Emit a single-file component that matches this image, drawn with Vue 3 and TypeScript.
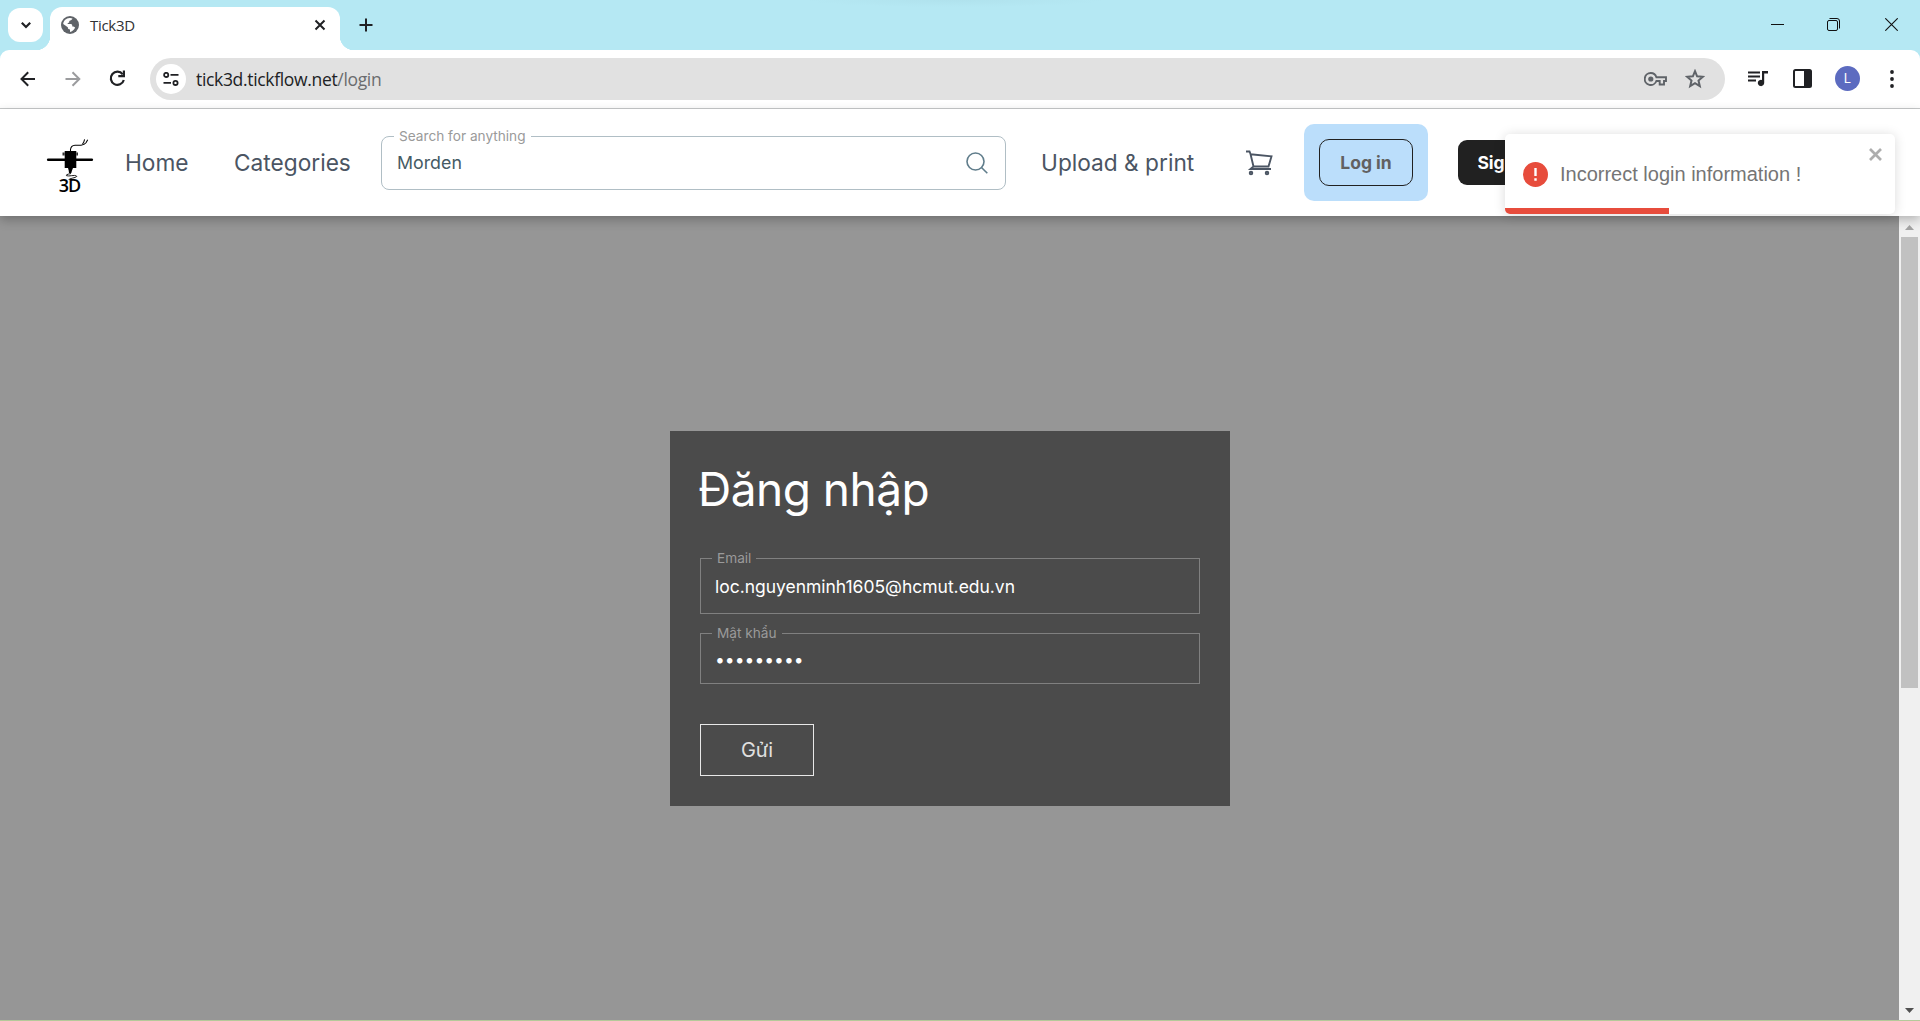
<script setup lang="ts">
import { ref } from 'vue'

const search = ref('Morden')
const email = ref('loc.nguyenminh1605@hcmut.edu.vn')
const mask = '•'.repeat(9)
const progress = ref(42)
</script>

<template>
  <div class="window">
    <div class="tabstrip">
      <button class="tab-search">
        <svg width="12" height="12" viewBox="0 0 12 12"><path d="M1.800 3.800 6 8l4.200-4.200" fill="none" stroke="#202124" stroke-width="2.200" /></svg>
      </button>
      <div class="tab">
        <svg class="globe" width="18" height="18" viewBox="0 0 18 18">
          <circle cx="9" cy="9" r="9" fill="#5f6368" />
          <path d="M8.600 2.100C9.700 2 10.600 2.200 11.500 2.600 11 3.500 10.300 4.400 9.200 4.600 8.200 4.800 8.100 5.600 8.200 6.600 7.300 6.700 6.600 7.100 6.600 8.100H9.800c1.300 0 1.500 1.200 1.500 2.300 1.300.1 2.300.4 2.900 1.200-1.200 2.700-3.200 4.200-5.200 4.300v-2.400c-1.400 0-2.200-.8-2.200-2.200L2.200 8C2.500 4.700 5 2.400 8.600 2.100Z" fill="#fff" />
        </svg>
        <span class="tab-title">Tick3D</span>
        <svg class="tab-close" width="12" height="12" viewBox="0 0 12 12"><path d="m1.500 1.500 9 9m0-9-9 9" stroke="#202124" stroke-width="2" /></svg>
      </div>
      <svg class="new-tab" width="14" height="14" viewBox="0 0 14 14"><path d="M7 .5v13M.5 7h13" stroke="#202124" stroke-width="2" /></svg>
      <div class="caption">
        <svg width="13" height="13" viewBox="0 0 13 13"><path d="M0 6.500h13" stroke="#111" /></svg>
        <svg class="restore" width="13" height="13" viewBox="0 0 13 13" fill="none" stroke="#111"><rect x=".5" y="2.500" width="10" height="10" rx="1.500" /><path d="M2.500.500h7.500a2.500 2.500 0 0 1 2.500 2.500v7.500" /></svg>
        <svg width="13" height="13" viewBox="0 0 13 13"><path d="m.3.3 12.400 12.400m0-12.400L.3 12.700" stroke="#111" stroke-width="1.100" /></svg>
      </div>
    </div>

    <div class="toolbar">
      <svg class="back" width="16" height="16" viewBox="0 0 16 16" fill="none" stroke="#202124" stroke-width="2"><path d="M15 8H2M8.200 1.200 1.500 8l6.700 6.800" /></svg>
      <svg class="forward" width="16" height="16" viewBox="0 0 16 16" fill="none" stroke="#9b9c9e" stroke-width="2"><path d="M.5 8H14M7.500 1.200 14.300 8l-6.800 6.800" /></svg>
      <svg class="reload" width="17" height="17" viewBox="0 0 17 17"><path d="M13.700 4.300A6.600 6.600 0 1 0 14.800 10" fill="none" stroke="#202124" stroke-width="2.200" /><path d="M16 .5v6.700H9.300V5h4.500V.5Z" fill="#202124" /></svg>
      <div class="omnibox">
        <span class="site-info">
          <svg width="16" height="14" viewBox="0 0 16 14" fill="none" stroke="#202124" stroke-width="1.800"><circle cx="3.200" cy="2.900" r="2.100" /><path d="M7.500 2.900H15.500M.5 10.900H8" /><circle cx="12.500" cy="10.900" r="2.100" /></svg>
        </span>
        <span class="url">tick3d.tickflow.net<span class="path">/login</span></span>
        <svg class="key" width="23" height="14" viewBox="0 0 23 14"><path d="M6.800 1a6 6 0 1 0 5.600 8h3.300v3.500h4.300V9H22V5.200h-9.600A6 6 0 0 0 6.800 1Z" fill="none" stroke="#5f6368" stroke-width="1.900" /><circle cx="6.800" cy="7" r="2.600" fill="#5f6368" /></svg>
        <svg class="star" width="20" height="20" viewBox="0 0 20 20"><path d="m10 2.200 2.100 5.100 5.700.5-4.300 3.800 1.300 5.600-4.800-3-4.800 3 1.300-5.600-4.300-3.800 5.700-.5Z" fill="none" stroke="#5f6368" stroke-width="2" /></svg>
      </div>
      <svg class="media" width="20" height="16" viewBox="0 0 20 16"><path d="M0 1.500h12M0 5.500h12M0 9.500h8" stroke="#202124" stroke-width="2" /><path d="M14 0h6v2.500h-3.800V12a3.200 3.200 0 1 1-2.200-3.100Z" fill="#202124" /></svg>
      <svg class="panel" width="19" height="19" viewBox="0 0 19 19"><rect x="1" y="1" width="17" height="17" rx="1.500" fill="#fff" stroke="#202124" stroke-width="2" /><path d="M11 1h7v17h-7Z" fill="#202124" /></svg>
      <span class="avatar">L</span>
      <svg class="menu" width="4" height="18" viewBox="0 0 4 18" fill="#202124"><circle cx="2" cy="2" r="1.900" /><circle cx="2" cy="9" r="1.900" /><circle cx="2" cy="16" r="1.900" /></svg>
    </div>

    <header class="site-header">
      <svg class="logo" width="48" height="79" viewBox="0 -8 48 79">
        <path d="M2.200 28.700h43.600" stroke="#000" stroke-width="2.600" stroke-linecap="round" />
        <path d="M18.700 20h11.600v17H18.700Z" fill="#000" />
        <path d="M16.500 21.500h2.200v3h-2.200ZM30.300 21.500h1.700v3h-1.700Z" fill="#333" />
        <path d="M22 37h5l-1 2.500-.7 2.500h-2.300l-.3-2.500Z" fill="#000" />
        <path d="M24.500 20v-1.500q.5-4 4.500-4.300h6q3.500-.2 5-2.400l1.700-3M36.500 13l1.200-1.700.9-3" fill="none" stroke="#000" stroke-width="1.050" />
        <path d="M25 42.500q-6 1.200-4.500 2.200c2 1 8.500-1.200 10 .3 1.500 1.700-7 2-8 4" fill="none" stroke="#000" stroke-width=".9" />
        <text x="12.800" y="61.300" font-size="18" font-weight="600" letter-spacing="-1.200">3D</text>
      </svg>
      <a class="nav home">Home</a>
      <a class="nav categories">Categories</a>
      <fieldset class="search">
        <legend>Search for anything</legend>
        <span class="value">{{ search }}</span>
        <svg width="22" height="22" viewBox="0 0 22 22" fill="none" stroke="#607d8b" stroke-width="1.600"><circle cx="9.500" cy="9.500" r="8.500" /><path d="m15.500 15.500 5.800 5.800" /></svg>
      </fieldset>
      <a class="nav upload">Upload &amp; print</a>
      <svg class="cart" width="27" height="26" viewBox="0 0 27 26" fill="none" stroke="#4b5563" stroke-width="1.900"><path d="M0 1.500h3.500l1 2.500 3 12.500M4.500 4.300l21 2-3 10.200h-15l-3 2.500h20.500" /><circle cx="5" cy="23" r="1.300" /><circle cx="21" cy="23" r="1.300" /></svg>
      <span class="login-wrap"><button class="login">Log in</button></span>
      <button class="signup">Sign up</button>
    </header>

    <div class="viewport">
      <main class="page">
        <form class="card">
          <h1>Đăng nhập</h1>
          <fieldset class="field email">
            <legend>Email</legend>
            <span>{{ email }}</span>
          </fieldset>
          <fieldset class="field password">
            <legend>Mật khẩu</legend>
            <span>{{ mask }}</span>
          </fieldset>
          <button class="submit" type="button">Gửi</button>
        </form>
      </main>
      <div class="scrollbar">
        <svg width="9" height="5" viewBox="0 0 9 5"><path d="M4.500 0 9 5H0Z" fill="#a3a3a3" /></svg>
        <div class="thumb"></div>
        <svg width="9" height="5" viewBox="0 0 9 5"><path d="M0 0h9L4.500 5Z" fill="#505050" /></svg>
      </div>
    </div>
    <div class="edge"></div>

    <div class="toast">
      <svg class="alert" width="25" height="25" viewBox="0 0 25 25"><circle cx="12.500" cy="12.500" r="12.500" fill="#e74c3c" /><path d="M12.500 6v8" stroke="#fff" stroke-width="2.400" /><path d="M12.500 16.300v2.500" stroke="#fff" stroke-width="2.400" /></svg>
      <span class="message">Incorrect login information !</span>
      <svg class="dismiss" width="13" height="13" viewBox="0 0 13 13"><path d="m1 1 11 11m0-11L1 12" stroke="#adadad" stroke-width="2.700" /></svg>
      <div class="progress" :style="{ width: progress + '%' }"></div>
    </div>
  </div>
</template>

<style>
body {
  overflow: hidden;
}
</style>

<style scoped>
* {
  box-sizing: border-box;
}
svg {
  display: block;
  flex: none;
}
button {
  font: inherit;
  border: 0;
  padding: 0;
}
.window {
  position: relative;
  width: 1920px;
  height: 1021px;
  display: flex;
  flex-direction: column;
  overflow: hidden;
  background: #fff;
  font-family: Inter, sans-serif;
}
.tabstrip {
  height: 50px;
  flex: none;
  display: flex;
  background: radial-gradient(ellipse 150px 7px at 955px 0, #b0e2ed, #b5e8f3);
  padding-left: 8px;
}
.tab-search {
  width: 35px;
  height: 34px;
  margin-top: 8px;
  border-radius: 12px;
  background: #fff;
  display: flex;
  align-items: center;
  justify-content: center;
}
.tab {
  position: relative;
  width: 290px;
  height: 43px;
  margin: 7px 0 0 7px;
  padding: 0 14px 7px 11px;
  display: flex;
  align-items: center;
  background: #fff;
  border-radius: 12px 12px 0 0;
}
.tab::before,
.tab::after {
  content: '';
  position: absolute;
  bottom: 0;
  width: 14px;
  height: 14px;
}
.tab::before {
  left: -14px;
  background: radial-gradient(circle at 0 0, transparent 14px, #fff 14.500px);
}
.tab::after {
  right: -14px;
  background: radial-gradient(circle at 100% 0, transparent 14px, #fff 14.500px);
}
.tab-title {
  margin-left: 11px;
  font: 15px 'Open Sans', sans-serif;
  letter-spacing: -0.3px;
  color: #303134;
}
.tab-close {
  margin-left: auto;
}
.new-tab {
  margin: 18px 0 0 19px;
}
.caption {
  margin: 18px 22px 0 auto;
  display: flex;
  gap: 44px;
}
.restore {
  margin: 0 1px 0 -1px;
}
.toolbar {
  height: 59px;
  flex: none;
  display: flex;
  align-items: center;
  padding: 0 26px 1px 20px;
  background: #fff;
  border-bottom: 1px solid #c7c9ca;
  border-radius: 9px 9px 0 0;
  box-shadow: 0 -10px 0 #b5e8f3;
  clip-path: inset(0);
}
.forward {
  margin-left: 29px;
}
.reload {
  margin-left: 28px;
}
.omnibox {
  width: 1575px;
  height: 42px;
  margin-left: 24px;
  border-radius: 21px;
  background: #e1e1e1;
  display: flex;
  align-items: center;
  padding: 0 20px 0 6px;
}
.site-info {
  width: 30px;
  height: 30px;
  border-radius: 50%;
  background: #fff;
  display: flex;
  align-items: center;
  justify-content: center;
}
.url {
  margin-left: 10px;
  font: 17.500px 'Open Sans', sans-serif;
  letter-spacing: -0.330px;
  color: #202124;
}
.path {
  color: #6a6c6e;
}
.key {
  margin-left: auto;
}
.star {
  margin-left: 18px;
}
.media {
  margin-left: 23px;
}
.panel {
  margin-left: 25px;
}
.avatar {
  width: 25px;
  height: 25px;
  margin-left: 23px;
  border-radius: 50%;
  background: #5c6bc0;
  color: #fff;
  font-size: 13px;
  line-height: 25px;
  text-align: center;
}
.menu {
  margin-left: auto;
}
.site-header {
  position: relative;
  z-index: 1;
  height: 107px;
  flex: none;
  display: flex;
  align-items: center;
  padding-left: 46px;
  background: #fff;
  box-shadow: 0 4px 10px rgba(0, 0, 0, 0.25);
}
.logo {
  font-family: 'Open Sans', sans-serif;
}
.nav {
  font-size: 22.700px;
  color: #4b5563;
  white-space: nowrap;
}
.home {
  width: 109px;
  margin-left: 31px;
}
.categories {
  width: 147px;
}
fieldset {
  margin: 0;
  padding: 0;
  min-width: 0;
}
legend {
  padding: 0 5px;
  font-size: 13.650px;
  line-height: 16px;
  color: #9a9a9a;
}
.search {
  width: 625px;
  height: 62px;
  margin-top: -7px;
  padding: 0 17px 0 15px;
  border: 1px solid #b0bec5;
  border-radius: 8px;
  display: flex;
  justify-content: space-between;
}
.search legend {
  margin-left: -3px;
}
.value {
  margin-top: 8px;
  font-size: 17.800px;
  line-height: 22px;
  color: #455a64;
}
.search svg {
  margin-top: 8px;
}
.upload {
  width: 205px;
  margin-left: 35px;
}
.login-wrap {
  width: 124px;
  height: 77px;
  margin-left: 31px;
  border-radius: 10px;
  background: #bbdefb;
  display: flex;
  align-items: center;
  justify-content: center;
}
.login {
  width: 94px;
  height: 47px;
  border: 1px solid #212121;
  border-radius: 10px;
  background: transparent;
  color: #616161;
  font-size: 17.500px;
  font-weight: 700;
}
.signup {
  width: 103px;
  height: 45px;
  margin-left: 30px;
  border-radius: 9px;
  background: #212121;
  color: #fff;
  font-size: 17.500px;
  font-weight: 700;
}
.viewport {
  height: 804px;
  display: flex;
}
.page {
  width: 1899px;
  background: #969696;
  padding: 215px 0 0 670px;
}
.card {
  width: 560px;
  height: 375px;
  padding: 30px;
  background: #4b4b4b;
  display: flex;
  flex-direction: column;
}
h1 {
  margin: -1px 0 40px -2px;
  height: 58px;
  line-height: 58px;
  font-size: 46px;
  letter-spacing: -0.500px;
  font-weight: 400;
  color: #fff;
}
.field {
  width: 500px;
  border: 1px solid #808080;
  color: #fff;
  padding: 0 15px;
}
.field legend {
  margin-left: -4px;
}
.email {
  height: 64px;
  margin-top: -8px;
  font-size: 17.500px;
}
.password {
  height: 59px;
  margin-top: 11px;
  font-size: 17.500px;
}
.field span {
  display: block;
  margin-left: -1px;
  line-height: 22px;
}
.email span {
  margin-top: 10px;
  letter-spacing: -0.020px;
}
.password span {
  margin-top: 8px;
}
.submit {
  width: 114px;
  height: 52px;
  margin-top: 40px;
  border: 1px solid #e8e8e8;
  background: transparent;
  color: #e0e0e0;
  font-size: 20px;
}
.scrollbar {
  width: 21px;
  background: #f0f0f0;
  display: flex;
  flex-direction: column;
  align-items: center;
  padding: 9px 0 7px;
}
.thumb {
  width: 17px;
  height: 451px;
  margin: 7px 0 auto;
  background: #c1c1c1;
}
.edge {
  height: 1px;
  background: #b5c99a;
}
.toast {
  position: absolute;
  z-index: 2;
  left: 1505px;
  top: 134px;
  width: 390px;
  height: 80px;
  border-radius: 5px;
  background: #fff;
  overflow: hidden;
  box-shadow: 0 1px 12px rgba(0, 0, 0, 0.15);
  display: flex;
  align-items: center;
  padding: 1px 13px 0 18px;
}
.message {
  margin-left: 12px;
  font: 20px 'Liberation Sans', sans-serif;
  color: #757575;
}
.dismiss {
  margin: 13px 0 0 auto;
  align-self: flex-start;
}
.progress {
  position: absolute;
  left: 0;
  bottom: 0;
  height: 6px;
  background: #e74c3c;
}
</style>
